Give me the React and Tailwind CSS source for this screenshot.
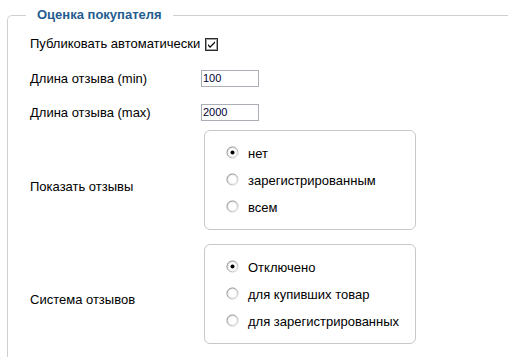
import React from "react";

function Radio({ checked }) {
  return (
    <svg width="13" height="13" viewBox="0 0 13 13" className="shrink-0">
      <defs>
        <linearGradient id="rg" x1="0" y1="0" x2="1" y2="1">
          <stop offset="0" stopColor="#6f6f6f" />
          <stop offset="0.5" stopColor="#9a9a9a" />
          <stop offset="1" stopColor="#e4e4e4" />
        </linearGradient>
      </defs>
      <circle cx="6.5" cy="6.5" r="5.5" fill="#fff" stroke="url(#rg)" strokeWidth="1" />
      <circle cx="6.5" cy="6.5" r="4.5" fill="none" stroke="#d8d8d8" strokeWidth="0.6" />
      {checked && <circle cx="6.5" cy="6.5" r="2" fill="#000" />}
    </svg>
  );
}

function Checkbox() {
  return (
    <svg width="13" height="13" viewBox="0 0 13 13" className="shrink-0">
      <rect x="0.5" y="0.5" width="12" height="12" fill="#fff" stroke="#2b2b2b" />
      <rect x="1.5" y="1.5" width="10" height="10" fill="none" stroke="#a0a0a0" />
      <path d="M3 6 L5 8.3 L10 3.2 L10 5 L5 10 L3 7.8 Z" fill="#000" />
    </svg>
  );
}

function RadioBox({ options }) {
  return (
    <div className="ml-[174px] w-[212px] h-[100px] border border-[#c8c8c8] rounded-[6px] pt-[15px] pl-[21px] flex flex-col gap-[14px]">
      {options.map((o, i) => (
        <div key={i} className="flex items-center h-[13px]">
          <Radio checked={i === 0} />
          <span className="ml-[9px] pt-[2px]">{o}</span>
        </div>
      ))}
    </div>
  );
}

export default function App() {
  return (
    <div
      className="w-[508px] h-[357px] overflow-hidden bg-white text-[13px] text-black"
      style={{ fontFamily: '"Liberation Sans", Arial, sans-serif' }}
    >
      <fieldset className="ml-[7px] mt-[7px] w-[540px] h-[400px] border border-[#cfcfcf] rounded-[5px] pl-[18px]">
        <legend className="px-[11px] text-[13px] font-bold leading-[16px] text-[#255c8f]">
          Оценка покупателя
        </legend>
        <div className="pl-[4px] flex flex-col">
          <div className="mt-[13px] h-[16px] flex items-center">
            <span>Публиковать автоматически</span>
            <span className="ml-[5px]"><Checkbox /></span>
          </div>
          <div className="mt-[18px] h-[17px] flex items-center">
            <span className="w-[171px]">Длина отзыва (min)</span>
            <div className="w-[58px] h-[17px] border border-[#a9afb5] text-[11px] leading-[15px] pl-[1px] text-[#000033]">100</div>
          </div>
          <div className="mt-[17px] h-[17px] flex items-center">
            <span className="w-[171px]">Длина отзыва (max)</span>
            <div className="w-[58px] h-[17px] border border-[#a9afb5] text-[11px] leading-[15px] pl-[1px] text-[#000033]">2000</div>
          </div>
          <div className="mt-[9px] relative">
            <span className="absolute left-0 top-[47px]">Показать отзывы</span>
            <RadioBox options={["нет", "зарегистрированным", "всем"]} />
          </div>
          <div className="mt-[14px] relative">
            <span className="absolute left-0 top-[46px]">Система отзывов</span>
            <RadioBox options={["Отключено", "для купивших товар", "для зарегистрированных"]} />
          </div>
        </div>
      </fieldset>
    </div>
  );
}
